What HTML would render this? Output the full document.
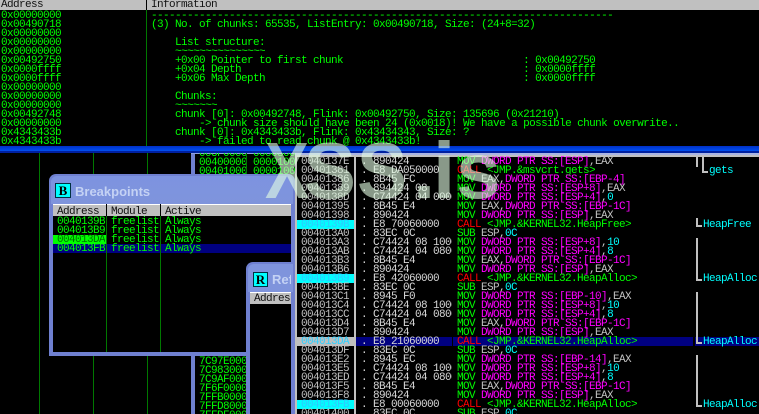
<!DOCTYPE html>
<html><head><meta charset="utf-8"><style>
*{margin:0;padding:0;box-sizing:border-box}
html,body{width:759px;height:414px;overflow:hidden;background:#000}
body{position:relative;font:11px/9px "Liberation Mono",monospace;letter-spacing:-.6px;color:#0f0}
div,pre,svg{position:absolute}
pre{font:11px/9px "Liberation Mono",monospace;white-space:pre;overflow:hidden;margin-top:-1px;padding-top:2px;letter-spacing:-.6px}
.g{color:#c0c0c0}.m{color:#f0f}.c{color:#0ff}.r{color:#f00}.n{color:#0f0}
.hd{background:#c0c0c0;color:#111;height:12px;line-height:13px}
.ln{background:#007800;width:1px}
.b{background:#c0c0c0}
.t{font:bold 13px/15px "Liberation Sans",sans-serif;color:#c4d2f4;letter-spacing:0}
.ic{background:#0ff;border:1px solid #003040;color:#000;font:bold 13px/13px "Liberation Serif",serif;text-align:center;letter-spacing:0}
</style></head><body>

<div class="hd" style="left:0;top:0;width:759px;height:10px;line-height:10px"><span style="position:absolute;left:1px">Address</span><span style="position:absolute;left:151px">Information</span></div>
<div style="left:146px;top:0;width:1px;height:10px;background:#000"></div>
<div class="ln" style="left:146px;top:10px;height:136px"></div>
<pre style="left:1px;top:11px;width:140px;height:137px">0x00000000
0x00490718
0x00000000
0x00000000
0x00000000
0x00492750
0x0000ffff
0x0000ffff
0x00000000
0x00000000
0x00000000
0x00492748
0x00000000
0x4343433b
0x4343433b</pre>
<pre style="left:151px;top:11px;width:608px;height:137px">-----------------------------------------------------------------------------
(3) No. of chunks: 65535, ListEntry: 0x00490718, Size: (24+8=32)

    List structure:
    ~~~~~~~~~~~~~~~
    +0x00 Pointer to first chunk                              : 0x00492750
    +0x04 Depth                                               : 0x0000ffff
    +0x06 Max Depth                                           : 0x0000ffff

    Chunks:
    ~~~~~~~
    chunk [0]: 0x00492748, Flink: 0x00492750, Size: 135696 (0x21210)
        -&gt; chunk size should have been 24 (0x0018)! We have a possible chunk overwrite..
    chunk [0]: 0x4343433b, Flink: 0x43434343, Size: ?
        -&gt; failed to read chunk @ 0x4343433b!</pre>

<div style="left:0;top:146px;width:759px;height:5px;background:linear-gradient(#0030c8,#0050f0)"></div>
<div style="left:0;top:151px;width:759px;height:2px;background:#0020a0"></div>

<div class="ln" style="left:39px;top:153px;height:261px"></div>
<div class="ln" style="left:93px;top:153px;height:261px"></div>
<div class="ln" style="left:147px;top:153px;height:261px"></div>

<div style="left:191px;top:153px;width:105px;height:261px;background:#000;border-left:4px solid #6f80d0"></div>
<div style="left:191px;top:153px;width:105px;height:1px;background:#8f9fe0"></div>
<pre style="left:199px;top:149px;width:47px;height:40px;clip-path:inset(5px 0 0 0)">003F0000
00400000
00401000</pre>
<pre style="left:253px;top:149px;width:43px;height:40px;clip-path:inset(5px 0 0 0)">00003000
00001000
00001000</pre>
<div class="ln" style="left:246px;top:153px;height:261px"></div>
<pre style="left:199px;top:357px;width:47px;height:60px">7C97E000
7C983000
7C9AF000
7F6F0000
7FFB0000
7FFD8000
7FFDF000</pre>

<!-- Breakpoints -->
<div style="left:49px;top:174px;width:246px;height:182px;background:#6f80d0;border-radius:7px 7px 0 0"></div>
<div style="left:51px;top:176px;width:242px;height:28px;background:linear-gradient(#7d93e0,#7f94dc);border-radius:6px 6px 0 0"></div>
<div class="ic" style="left:55px;top:183px;width:16px;height:15px">B</div>
<div class="t" style="left:75px;top:184px">Breakpoints</div>
<div style="left:53px;top:204px;width:238px;height:148px;background:#000"></div>
<div style="left:53px;top:204px;width:238px;height:1px;background:#fff"></div>
<div class="hd" style="left:53px;top:205px;width:238px;height:11px;line-height:14px"><span style="position:absolute;left:4px">Address</span><span style="position:absolute;left:58px">Module</span><span style="position:absolute;left:112px">Active</span></div>
<div style="left:106px;top:204px;width:1px;height:12px;background:#000"></div>
<div style="left:160px;top:204px;width:1px;height:12px;background:#000"></div>
<div style="left:53px;top:235px;width:53px;height:9px;background:#0f0"></div>
<div style="left:53px;top:244px;width:238px;height:9px;background:#000080"></div>
<div class="ln" style="left:106px;top:216px;height:136px"></div>
<div class="ln" style="left:160px;top:216px;height:136px"></div>
<pre style="left:57px;top:217px;width:48px;height:40px">0040139B
004013B9
<span style="color:#007000">004013DA</span>
004013FB</pre>
<pre style="left:111px;top:217px;width:48px;height:40px">freelist
freelist
freelist
freelist</pre>
<pre style="left:165px;top:217px;width:60px;height:40px">Always
Always
Always
Always</pre>

<!-- References -->
<div style="left:246px;top:262px;width:49px;height:152px;background:#6f80d0;border-radius:7px 0 0 0"></div>
<div style="left:248px;top:264px;width:45px;height:28px;background:#7f94dc;border-radius:6px 0 0 0"></div>
<div class="ic" style="left:253px;top:272px;width:15px;height:15px">R</div>
<div class="t" style="left:272px;top:272px;width:19px;overflow:hidden">Ref</div>
<div style="left:250px;top:292px;width:41px;height:122px;background:#000"></div>
<div style="left:250px;top:292px;width:41px;height:1px;background:#fff"></div>
<div class="hd" style="left:250px;top:293px;width:41px;height:11px;line-height:12px;overflow:hidden;padding-left:4px;white-space:pre">Address</div>

<!-- Disassembly -->
<div style="left:295px;top:153px;width:464px;height:3px;background:#a8b4e4"></div>
<div style="left:295px;top:155px;width:464px;height:2px;background:#c0c0c0"></div>
<div style="left:295px;top:155px;width:2px;height:259px;background:#c0c0c0"></div>
<div style="left:297px;top:157px;width:462px;height:257px;background:#000"></div>
<div style="left:354px;top:157px;width:2px;height:257px;background:#c0c0c0"></div>
<div style="left:297px;top:220px;width:57px;height:9px;background:#0ff"></div>
<div style="left:297px;top:274px;width:57px;height:9px;background:#0ff"></div>
<div style="left:297px;top:337px;width:57px;height:9px;background:#c0c0c0"></div>
<div style="left:297px;top:400px;width:57px;height:9px;background:#0ff"></div>
<div style="left:356px;top:337px;width:403px;height:9px;background:#000080"></div>
<div style="left:452px;top:337px;width:1px;height:9px;background:#000"></div>
<div style="left:693px;top:337px;width:2px;height:9px;background:#000"></div>

<pre class="g" style="left:301px;top:157px;width:52px;height:262px">0040137E
00401381
00401386
00401389
0040138D
00401395
00401398
<span style="color:#30c8ff">0040139B</span>
004013A0
004013A3
004013AB
004013B3
004013B6
<span style="color:#30c8ff">004013B9</span>
004013BE
004013C1
004013C4
004013CC
004013D4
004013D7
<span style="color:#30d0ff">004013DA</span>
004013DF
004013E2
004013E5
004013ED
004013F5
004013F8
<span style="color:#30c8ff">004013FB</span>
00401400</pre>

<pre style="left:361px;top:157px;width:91px;height:262px;color:#d8d8d8">. 890424
. E8 DA050000
. 8B45 FC
. 894424 08
. C74424 04 00000000
. 8B45 E4
. 890424
. E8 70060000
. 83EC 0C
. C74424 08 10000000
. C74424 04 08000000
. 8B45 E4
. 890424
. E8 42060000
. 83EC 0C
. 8945 F0
. C74424 08 10000000
. C74424 04 08000000
. 8B45 E4
. 890424
. E8 21060000
. 83EC 0C
. 8945 EC
. C74424 08 10000000
. C74424 04 08000000
. 8B45 E4
. 890424
. E8 00060000
. 83EC 0C</pre>

<pre style="left:457px;top:157px;width:236px;height:262px"><span class="n">MOV </span><span class="m">DWORD PTR SS:[ESP]</span><span class="g">,EAX</span>
<span class="r">CALL </span><span class="n">&lt;JMP.&amp;msvcrt.gets&gt;</span>
<span class="n">MOV </span><span class="g">EAX,</span><span class="m">DWORD PTR SS:[EBP-4]</span>
<span class="n">MOV </span><span class="m">DWORD PTR SS:[ESP+8]</span><span class="g">,EAX</span>
<span class="n">MOV </span><span class="m">DWORD PTR SS:[ESP+4]</span><span class="g">,</span><span class="c">0</span>
<span class="n">MOV </span><span class="g">EAX,</span><span class="m">DWORD PTR SS:[EBP-1C]</span>
<span class="n">MOV </span><span class="m">DWORD PTR SS:[ESP]</span><span class="g">,EAX</span>
<span class="r">CALL </span><span class="n">&lt;JMP.&amp;KERNEL32.HeapFree&gt;</span>
<span class="n">SUB </span><span class="g">ESP,</span><span class="c">0C</span>
<span class="n">MOV </span><span class="m">DWORD PTR SS:[ESP+8]</span><span class="g">,</span><span class="c">10</span>
<span class="n">MOV </span><span class="m">DWORD PTR SS:[ESP+4]</span><span class="g">,</span><span class="c">8</span>
<span class="n">MOV </span><span class="g">EAX,</span><span class="m">DWORD PTR SS:[EBP-1C]</span>
<span class="n">MOV </span><span class="m">DWORD PTR SS:[ESP]</span><span class="g">,EAX</span>
<span class="r">CALL </span><span class="n">&lt;JMP.&amp;KERNEL32.HeapAlloc&gt;</span>
<span class="n">SUB </span><span class="g">ESP,</span><span class="c">0C</span>
<span class="n">MOV </span><span class="m">DWORD PTR SS:[EBP-10]</span><span class="g">,EAX</span>
<span class="n">MOV </span><span class="m">DWORD PTR SS:[ESP+8]</span><span class="g">,</span><span class="c">10</span>
<span class="n">MOV </span><span class="m">DWORD PTR SS:[ESP+4]</span><span class="g">,</span><span class="c">8</span>
<span class="n">MOV </span><span class="g">EAX,</span><span class="m">DWORD PTR SS:[EBP-1C]</span>
<span class="n">MOV </span><span class="m">DWORD PTR SS:[ESP]</span><span class="g">,EAX</span>
<span class="r">CALL </span><span class="n">&lt;JMP.&amp;KERNEL32.HeapAlloc&gt;</span>
<span class="n">SUB </span><span class="g">ESP,</span><span class="c">0C</span>
<span class="n">MOV </span><span class="m">DWORD PTR SS:[EBP-14]</span><span class="g">,EAX</span>
<span class="n">MOV </span><span class="m">DWORD PTR SS:[ESP+8]</span><span class="g">,</span><span class="c">10</span>
<span class="n">MOV </span><span class="m">DWORD PTR SS:[ESP+4]</span><span class="g">,</span><span class="c">8</span>
<span class="n">MOV </span><span class="g">EAX,</span><span class="m">DWORD PTR SS:[EBP-1C]</span>
<span class="n">MOV </span><span class="m">DWORD PTR SS:[ESP]</span><span class="g">,EAX</span>
<span class="r">CALL </span><span class="n">&lt;JMP.&amp;KERNEL32.HeapAlloc&gt;</span>
<span class="n">SUB </span><span class="g">ESP,</span><span class="c">0C</span></pre>

<!-- comment brackets -->
<div class="b" style="left:696px;top:157px;width:2px;height:10px"></div>
<div class="b" style="left:696px;top:218px;width:2px;height:9px"></div>
<div class="b" style="left:696px;top:225px;width:6px;height:2px"></div>
<div class="b" style="left:702px;top:157px;width:2px;height:15px"></div>
<div class="b" style="left:702px;top:171px;width:6px;height:2px"></div>
<div class="b" style="left:696px;top:238px;width:2px;height:43px"></div>
<div class="b" style="left:696px;top:279px;width:6px;height:2px"></div>
<div class="b" style="left:696px;top:292px;width:2px;height:52px"></div>
<div class="b" style="left:696px;top:342px;width:6px;height:2px"></div>
<div class="b" style="left:696px;top:355px;width:2px;height:52px"></div>
<div class="b" style="left:696px;top:405px;width:6px;height:2px"></div>
<pre class="c" style="left:709px;top:166px;width:50px;height:13px">gets</pre>
<pre class="c" style="left:703px;top:220px;width:56px;height:13px">HeapFree</pre>
<pre class="c" style="left:703px;top:274px;width:56px;height:13px">HeapAlloc</pre>
<pre class="c" style="left:703px;top:337px;width:56px;height:13px">HeapAlloc</pre>
<pre class="c" style="left:703px;top:400px;width:56px;height:13px">HeapAlloc</pre>

<!-- watermark -->
<svg width="759" height="274" viewBox="0 140 759 274" style="left:0;top:140px;letter-spacing:0" font-family="Liberation Sans" font-weight="bold" font-size="80" fill="#e4ffe4" fill-opacity=".6">
<text x="265" y="198" textLength="44" lengthAdjust="spacingAndGlyphs">X</text>
<text x="304" y="198" textLength="52" lengthAdjust="spacingAndGlyphs">S</text>
<text x="357" y="198" textLength="50" lengthAdjust="spacingAndGlyphs">S</text>
<text x="413" y="198">.</text>
<text x="433" y="198">i</text>
<text x="456" y="198">s</text>
</svg>
</body></html>
